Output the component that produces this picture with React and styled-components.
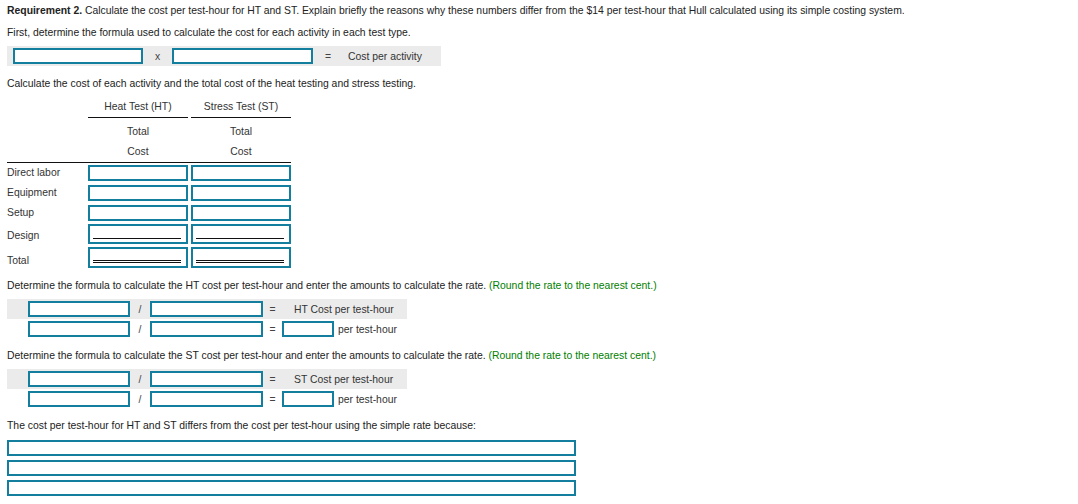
import React from "react";
import styled, { createGlobalStyle } from "styled-components";

const GlobalStyle = createGlobalStyle`
  * { box-sizing: border-box; }
  body {
    margin: 0;
    background: #fff;
    font-family: "Liberation Sans", Arial, sans-serif;
    font-size: 10.4px;
    color: #222;
  }
`;

const Page = styled.div`
  padding: 5px 0 0 7px;
  width: 1078px;
`;

const Text = styled.p`
  margin: ${p => p.$mt || 0}px 0 0 0;
  line-height: 12px;
  white-space: nowrap;
`;

const Hint = styled.span`
  color: #008000;
`;

const Box = styled.input`
  display: block;
  width: ${p => p.$w}px;
  height: ${p => p.$h || 16}px;
  border: 2px solid #137e9d;
  border-radius: 0;
  margin: 0;
  padding: 0;
  background: #fff;
  outline: none;
  font: inherit;
`;

const FormulaRow = styled.div`
  display: flex;
  align-items: center;
  width: ${p => p.$w}px;
  height: 20px;
  margin-top: ${p => p.$mt || 0}px;
  padding-left: ${p => p.$pl}px;
  background: ${p => (p.$band ? "#ebebeb" : "transparent")};
`;

const Op = styled.span`
  width: ${p => p.$w}px;
  text-align: center;
  color: #444;
`;

const Caption = styled.span`
  padding-left: ${p => p.$pl || 0}px;
  color: #333;
  white-space: nowrap;
`;

/* cost table */
const Table = styled.div`
  display: grid;
  grid-template-columns: 78px 100px 100px;
  column-gap: 3px;
  width: 285px;
  margin-top: 9px;
  color: #333;
`;

const Head = styled.div`
  grid-column: ${p => p.$col};
  text-align: center;
  line-height: ${p => p.$lh || 20}px;
  padding-bottom: ${p => p.$pb || 0}px;
  border-bottom: ${p => (p.$rule ? "1px solid #111" : "none")};
  margin-top: ${p => p.$mt || 0}px;
`;

const Divider = styled.div`
  grid-column: 1 / -1;
  height: 1px;
  background: #111;
  margin-bottom: 2px;
`;

const RowLabel = styled.div`
  grid-column: 1;
  align-self: end;
  padding-bottom: ${p => p.$pb ?? 2}px;
  line-height: 12px;
  white-space: nowrap;
`;

const Cell = styled(Box)`
  width: 100px;
  margin-top: ${p => p.$mt || 0}px;
  background-repeat: no-repeat;
  background-image: ${p =>
    p.$line === "single"
      ? "linear-gradient(#111, #111)"
      : p.$line === "double"
      ? "linear-gradient(#111, #111), linear-gradient(#111, #111)"
      : "none"};
  background-size: calc(100% - 8px) 1px, calc(100% - 8px) 1px;
  background-position: ${p =>
    p.$line === "double"
      ? "3px calc(100% - 5px), 3px calc(100% - 3px)"
      : "3px calc(100% - 3px)"};
`;

const Answer = styled(Box)`
  width: 569px;
  margin-top: ${p => p.$mt}px;
`;

const rows = [
  { label: "Direct labor", h: 16, mt: 0 },
  { label: "Equipment", h: 16, mt: 4 },
  { label: "Setup", h: 16, mt: 4 },
  { label: "Design", h: 20, mt: 3, line: "single" },
  { label: "Total", h: 21, mt: 3, line: "double", pb: 1 },
];

function RateBlock({ code, mt }) {
  return (
    <>
      <Text $mt={mt}>
        Determine the formula to calculate the {code} cost per test-hour and enter the amounts to
        calculate the rate. <Hint>(Round the rate to the nearest cent.)</Hint>
      </Text>
      <FormulaRow $band $w={400} $pl={21} $mt={7}>
        <Box $w={102} />
        <Op $w={20}>/</Op>
        <Box $w={113} />
        <Op $w={19}>=</Op>
        <Caption $pl={12}>{code} Cost per test-hour</Caption>
      </FormulaRow>
      <FormulaRow $w={400} $pl={21}>
        <Box $w={102} />
        <Op $w={20}>/</Op>
        <Box $w={113} />
        <Op $w={19}>=</Op>
        <Box $w={52} />
        <Caption $pl={4}>per test-hour</Caption>
      </FormulaRow>
    </>
  );
}

export default function App() {
  return (
    <Page>
      <GlobalStyle />
      <Text>
        <b>Requirement 2.</b> Calculate the cost per test-hour for HT and ST. Explain briefly the
        reasons why these numbers differ from the $14 per test-hour that Hull calculated using its
        simple costing system.
      </Text>
      <Text $mt={10}>First, determine the formula used to calculate the cost for each activity in each test type.</Text>

      <FormulaRow $band $w={434} $pl={6} $mt={7}>
        <Box $w={130} />
        <Op $w={29}>x</Op>
        <Box $w={141} />
        <Op $w={30}>=</Op>
        <Caption $pl={5}>Cost per activity</Caption>
      </FormulaRow>

      <Text $mt={12}>Calculate the cost of each activity and the total cost of the heat testing and stress testing.</Text>

      <Table>
        <Head $col={2} $lh={16} $pb={2} $rule>Heat Test (HT)</Head>
        <Head $col={3} $lh={16} $pb={2} $rule>Stress Test (ST)</Head>
        <Head $col={2} $mt={4}>Total<br />Cost</Head>
        <Head $col={3} $mt={4}>Total<br />Cost</Head>
        <Divider />
        {rows.map(r => (
          <React.Fragment key={r.label}>
            <RowLabel $pb={r.pb}>{r.label}</RowLabel>
            <Cell $h={r.h} $mt={r.mt} $line={r.line} />
            <Cell $h={r.h} $mt={r.mt} $line={r.line} />
          </React.Fragment>
        ))}
      </Table>

      <RateBlock code="HT" mt={12} />
      <RateBlock code="ST" mt={11} />

      <Text $mt={11}>
        The cost per test-hour for HT and ST differs from the cost per test-hour using the simple
        rate because:
      </Text>
      <Answer $mt={8} />
      <Answer $mt={4} />
      <Answer $mt={4} />
    </Page>
  );
}
